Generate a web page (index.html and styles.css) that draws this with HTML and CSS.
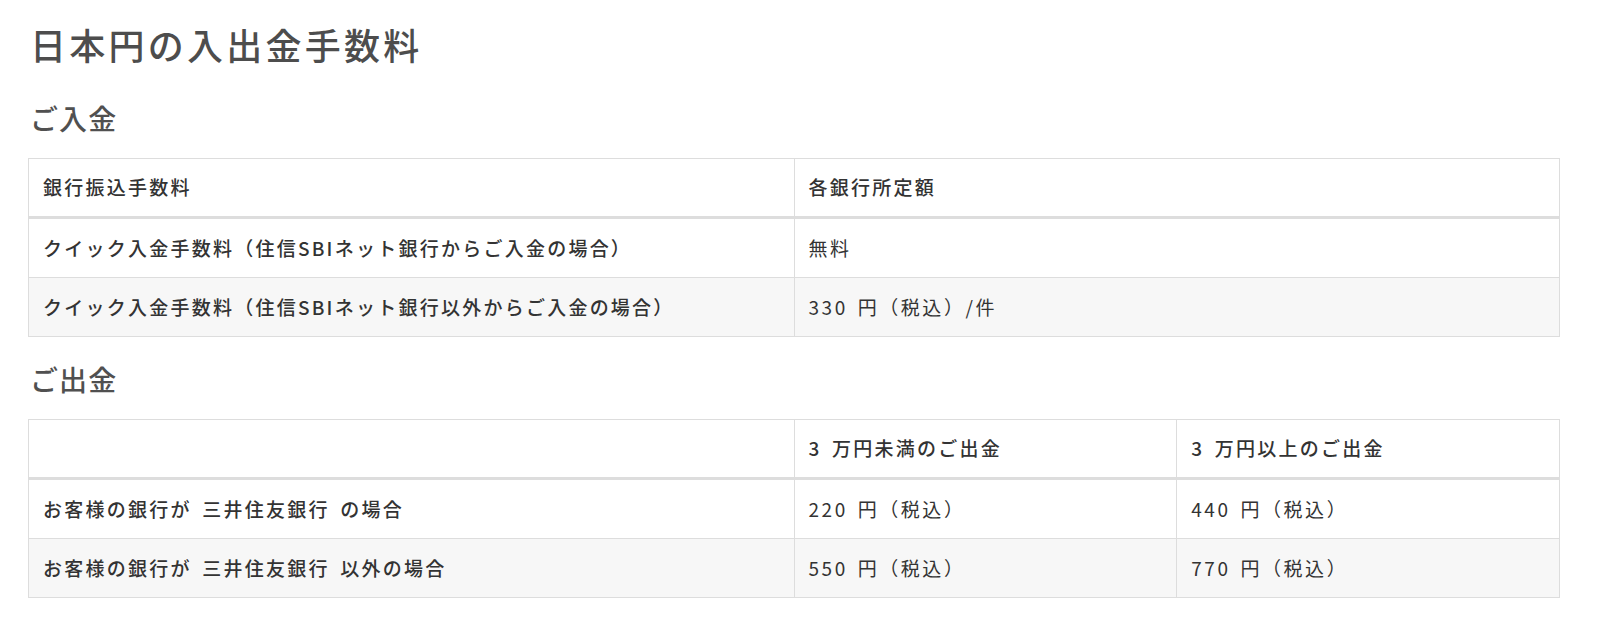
FILE: index.html
```html
<!DOCTYPE html>
<html lang="ja">
<head>
<meta charset="utf-8">
<title>日本円の入出金手数料</title>
<link rel="stylesheet" href="styles.css">
</head>
<body>
<main class="page">
  <h1 class="title">日本円の入出金手数料</h1>

  <h2 class="section">ご入金</h2>
  <table class="fee-table">
    <colgroup><col class="c-half"><col class="c-half"></colgroup>
    <thead>
      <tr><th>銀行振込手数料</th><th>各銀行所定額</th></tr>
    </thead>
    <tbody>
      <tr><th>クイック入金手数料（住信SBIネット銀行からご入金の場合）</th><td>無料</td></tr>
      <tr><th>クイック入金手数料（住信SBIネット銀行以外からご入金の場合）</th><td>330 円（税込）/件</td></tr>
    </tbody>
  </table>

  <h2 class="section">ご出金</h2>
  <table class="fee-table">
    <colgroup><col class="c-half"><col class="c-quarter"><col class="c-quarter"></colgroup>
    <thead>
      <tr><th></th><th>3 万円未満のご出金</th><th>3 万円以上のご出金</th></tr>
    </thead>
    <tbody>
      <tr><th>お客様の銀行が 三井住友銀行 の場合</th><td>220 円（税込）</td><td>440 円（税込）</td></tr>
      <tr><th>お客様の銀行が 三井住友銀行 以外の場合</th><td>550 円（税込）</td><td>770 円（税込）</td></tr>
    </tbody>
  </table>
</main>
</body>
</html>
```

FILE: styles.css
```css
html, body {
  margin: 0;
  padding: 0;
  background: #ffffff;
}

body {
  font-family: "Noto Sans CJK JP", "Noto Sans", "Liberation Sans", sans-serif;
  color: #333333;
}

.page {
  padding: 19px 40px 0 28px;
}

.title {
  margin: 0;
  font-size: 36px;
  line-height: 50px;
  font-weight: 500;
  color: #4d4d4d;
  letter-spacing: 0.09em;
  padding-left: 2px;
}

.section {
  margin: 29px 0 20px;
  font-size: 28px;
  line-height: 40px;
  font-weight: 500;
  color: #505050;
  letter-spacing: 0.04em;
  padding-left: 2px;
}

.fee-table + .section {
  margin-top: 22px;
}

.fee-table {
  width: 100%;
  border-collapse: separate;
  border-spacing: 0;
  table-layout: fixed;
  border-top: 1px solid #dddddd;
  border-left: 1px solid #dddddd;
}

.c-half { width: 50%; }
.c-quarter { width: 25%; }

.fee-table th,
.fee-table td {
  text-align: left;
  padding: 17px 14px;
  font-size: 19px;
  line-height: 24px;
  letter-spacing: 0.118em;
  word-spacing: 4px;
  border-right: 1px solid #dddddd;
  border-bottom: 1px solid #dddddd;
  color: #333333;
}

.fee-table th {
  font-weight: 500;
}

.fee-table td {
  font-weight: 400;
  letter-spacing: 0.135em;
  word-spacing: 3px;
}

.fee-table thead th {
  padding: 16px 14px 17px;
  border-bottom: 3px solid #dddddd;
}

.fee-table tbody tr:nth-child(even) th,
.fee-table tbody tr:nth-child(even) td {
  background: #f7f7f7;
}
```
